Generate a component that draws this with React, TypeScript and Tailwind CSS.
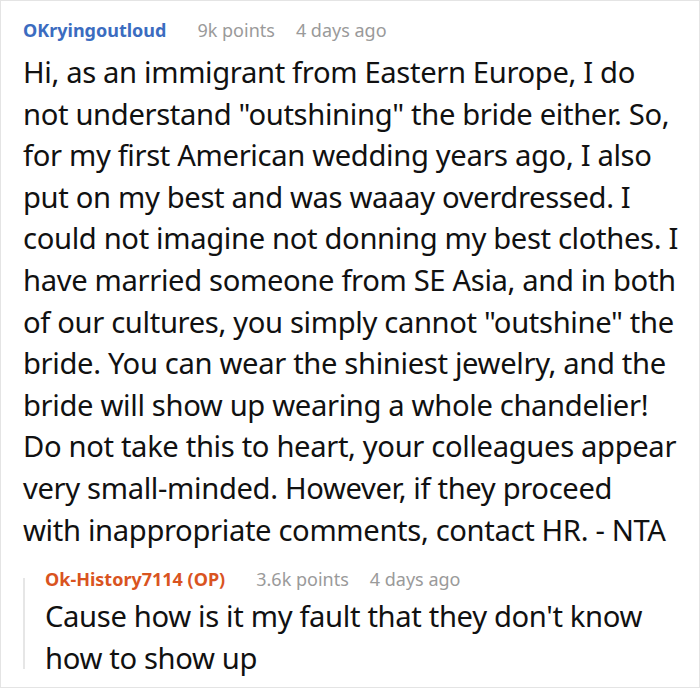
export default function App() {
  return (
    <main className="w-[700px] h-[688px] bg-white border border-[#e4e4e4] overflow-hidden" style={{ fontFamily: '"Noto Sans", sans-serif' }}>
      <div className="pl-[22px] pt-[15px]">
        <div className="flex items-center gap-[31px] text-[18px] leading-[28px]">
          <span className="font-bold text-[#3b6cc0]">OKryingoutloud</span>
          <div className="flex gap-[21px] text-[#9a9a9a]">
            <span>9k points</span>
            <span>4 days ago</span>
          </div>
        </div>
        <p className="text-[29.2px] tracking-[-0.35px] leading-[41.6px] text-[#111] mt-[8px] whitespace-nowrap">
          Hi, as an immigrant from Eastern Europe, I do<br />
          not understand "outshining" the bride either. So,<br />
          for my first American wedding years ago, I also<br />
          put on my best and was waaay overdressed. I<br />
          could not imagine not donning my best clothes. I<br />
          have married someone from SE Asia, and in both<br />
          of our cultures, you simply cannot "outshine" the<br />
          bride. You can wear the shiniest jewelry, and the<br />
          bride will show up wearing a whole chandelier!<br />
          Do not take this to heart, your colleagues appear<br />
          very small-minded. However, if they proceed<br />
          with inappropriate comments, contact HR. - NTA
        </p>
        <div className="mt-[14px] flex">
          <div className="w-[2px] bg-[#e6e6e6] mt-[13px] mb-[10px] shrink-0" />
          <div className="pl-[20px]">
            <div className="flex items-center gap-[31px] text-[18px] leading-[28px]">
              <span className="font-bold text-[#d9541f]">Ok-History7114 (OP)</span>
              <div className="flex gap-[21px] text-[#9a9a9a]">
                <span>3.6k points</span>
                <span>4 days ago</span>
              </div>
            </div>
            <p className="text-[29.2px] tracking-[-0.35px] leading-[41.6px] text-[#111] mt-[3px] whitespace-nowrap">
              Cause how is it my fault that they don't know<br />
              how to show up
            </p>
          </div>
        </div>
      </div>
    </main>
  )
}
